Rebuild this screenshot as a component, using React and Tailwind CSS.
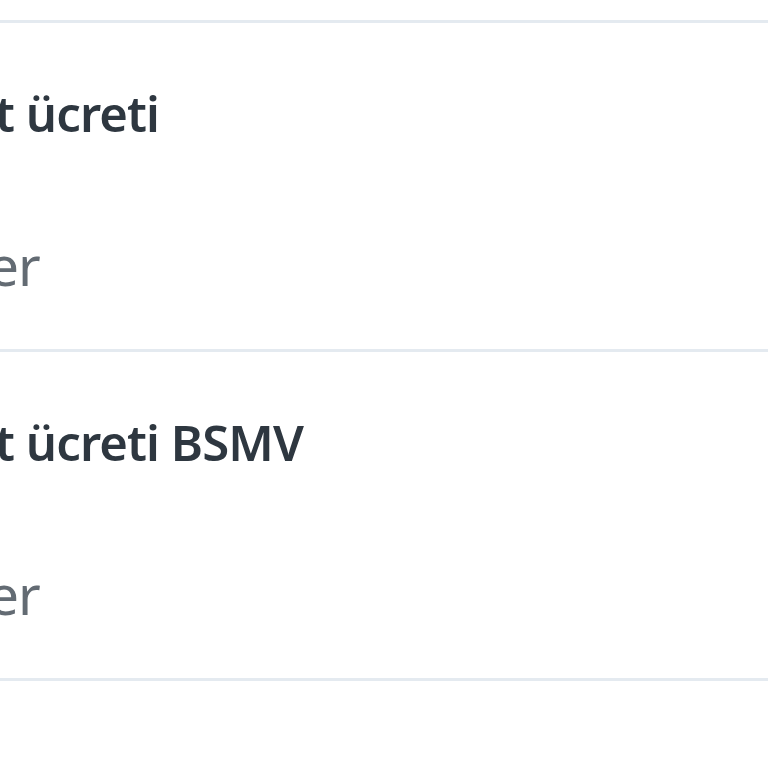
export default function App() {
  const rows = [
    { pre: "Yıllık kar", title: "t ücreti", subPre: "Diğ", sub: "er" },
    { pre: "Yıllık kar", title: "t ücreti BSMV", subPre: "Diğ", sub: "er" },
  ];

  return (
    <div className="w-[768px] h-[768px] overflow-hidden bg-white pt-[20px]" style={{ fontFamily: '"Noto Sans", "Open Sans", sans-serif' }}>
      <div className="border-t-[3px] border-[#e4eaf0]">
        {rows.map((r, i) => (
          <div key={i} className="h-[329px] border-b-[3px] border-[#e4eaf0] flex flex-col pt-[66px]">
            <div className="flex -ml-[5px] leading-none text-[49px] font-semibold tracking-[-0.9px] text-[#2e3740]">
              <div className="w-0 flex justify-end">
                <span className="whitespace-nowrap">{r.pre}</span>
              </div>
              <span className="whitespace-nowrap">{r.title}</span>
            </div>
            <div className="flex -ml-[12px] leading-none text-[55px] tracking-[-1px] text-[#636b73] mt-[99px]">
              <div className="w-0 flex justify-end">
                <span className="whitespace-nowrap">{r.subPre}</span>
              </div>
              <span className="whitespace-nowrap">{r.sub}</span>
            </div>
          </div>
        ))}
      </div>
    </div>
  );
}
